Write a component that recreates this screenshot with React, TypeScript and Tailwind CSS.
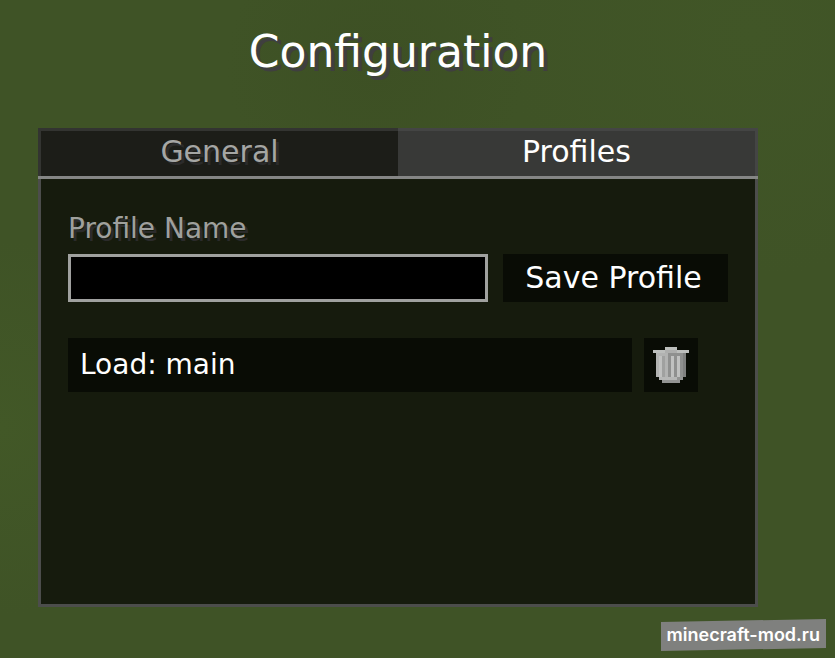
import React, { useState } from "react";

const tabs = ["General", "Profiles"];

interface ProfileRowProps {
  name: string;
}

const TrashIcon: React.FC = () => (
  <svg viewBox="0 0 12 12" className="size-9" shapeRendering="crispEdges" aria-hidden="true">
    <path fill="#bcbebc" d="M4 0h4v1H4zM0 1h12v1H0z" />
    <path fill="#adaead" d="M4 1h4v1H4z" />
    <path fill="#b2b3b2" d="M1 2h9v8H1z" />
    <path fill="#8f908f" d="M5 2h5v1H5zM9 3h1v7H9z" />
    <path fill="#7f807f" d="M10 2h1v8h-1z" />
    <path fill="#c0c1c0" d="M2 3h1v7H2zM6 3h1v7H6zM8 3h1v7H8z" />
    <path fill="#a0a1a0" d="M3 3h1v7H3z" />
    <path fill="#8f908f" d="M5 3h1v7H5zM7 3h1v7H7z" />
    <path fill="#b6b7b6" d="M2 10h6v1H2z" />
    <path fill="#939493" d="M8 10h2v1H8zM3 11h6v1H3z" />
  </svg>
);

const ProfileRow: React.FC<ProfileRowProps> = ({ name }) => (
  <li className="flex gap-3">
    <button className="h-[54px] flex-1 bg-[#090c05] px-3 text-left text-[28px]">Load: {name}</button>
    <button
      aria-label={`Delete ${name}`}
      className="flex size-[54px] items-center justify-center bg-[#090c05]"
    >
      <TrashIcon />
    </button>
  </li>
);

const App: React.FC = () => {
  const [active, setActive] = useState("Profiles");
  const [profileName, setProfileName] = useState("");

  return (
    <div className="relative flex min-h-screen flex-col bg-[#3f5326] bg-[radial-gradient(circle_at_90%_5%,#415627_0,transparent_25%),radial-gradient(circle_at_0%_65%,#425827_0,transparent_20%),radial-gradient(circle_at_45%_10%,#3d5024_0,transparent_20%)] pt-6 pr-[77px] pb-[51px] pl-[38px] font-['DejaVu_Sans',sans-serif] text-[28px] leading-9 text-white">
      <h1 className="mb-12 text-center text-[44px] leading-14 [text-shadow:4px_4px_0_#3f3f3f]">
        Configuration
      </h1>

      <main className="flex flex-1 flex-col border-3 border-t-0 border-[#4c4d4b] bg-[#161b0d]">
        <div role="tablist" className="-mx-[3px] flex border-b-3 border-[#858685]">
          {tabs.map((tab) => (
            <button
              key={tab}
              role="tab"
              aria-selected={active === tab}
              onClick={() => setActive(tab)}
              className={`h-12 flex-1 border-t-3 pb-1 text-3xl ${
                active === tab
                  ? "border-r-3 border-[#444544] bg-[#383937] text-white"
                  : "border-l-3 border-[#333431] bg-[#1c1d18] text-[#a5a6a4] [text-shadow:3px_3px_0_#2b2b2b]"
              }`}
            >
              {tab}
            </button>
          ))}
        </div>

        <div className="px-[27px] pt-8">
          <label
            htmlFor="profile-name"
            className="mb-[7px] block text-[#9fa09d] [text-shadow:3px_3px_0_#2b2b2b]"
          >
            Profile Name
          </label>
          <div className="flex gap-[15px]">
            <input
              id="profile-name"
              type="text"
              value={profileName}
              onChange={(e) => setProfileName(e.target.value)}
              className="h-12 min-w-0 flex-1 border-3 border-[#a0a19f] bg-black px-2 outline-none"
            />
            <button className="h-12 w-[225px] bg-[#090c05] pr-1 text-3xl">Save Profile</button>
          </div>

          <ul className="mt-9 pr-[30px]">
            <ProfileRow name="main" />
          </ul>
        </div>
      </main>

      <a
        href="#"
        className="absolute right-[9px] bottom-[7px] bg-[#7f807e] px-[6px] font-[Inter,sans-serif] text-lg leading-8 font-semibold [clip-path:polygon(0_3px,100%_0,100%_29px,0_100%)]"
      >
        minecraft-mod.ru
      </a>
    </div>
  );
};

export default App;
